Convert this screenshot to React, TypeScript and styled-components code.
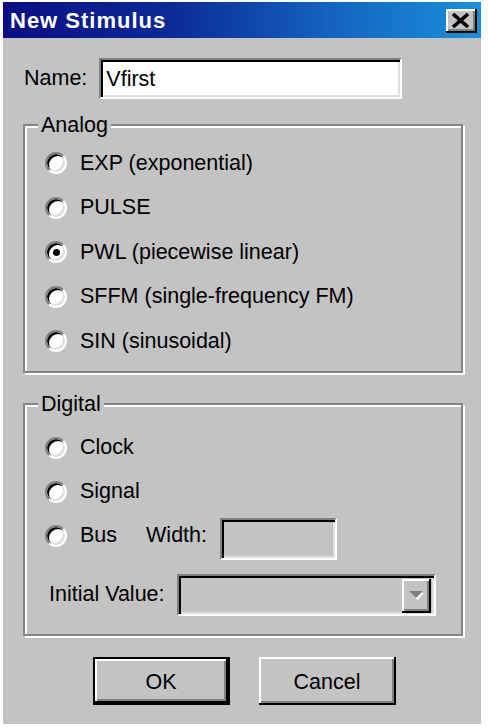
import React from "react";
import styled, { createGlobalStyle } from "styled-components";

const Global = createGlobalStyle`
  html, body { margin: 0; padding: 0; background: #ffffff; }
  body { font-family: "Liberation Sans", Arial, sans-serif; }
`;

const Window = styled.div`
  margin: 2px 0 0 3px;
  width: 478px;
  height: 722px;
  background: #c3c3c3;
  display: flex;
  flex-direction: column;
  font-family: "Liberation Sans", Arial, sans-serif;
  font-size: 21.5px;
  color: #000;
`;

const TitleBar = styled.div`
  height: 36px;
  flex: 0 0 36px;
  box-sizing: border-box;
  padding: 2px 4px 0 7px;
  display: flex;
  align-items: center;
  justify-content: space-between;
  background: linear-gradient(90deg, #0a0e82 0%, #0b2a98 35%, #1466c0 70%, #1a90d8 100%);
`;

const TitleText = styled.span`
  color: #fff;
  font-weight: bold;
  font-size: 22px;
  letter-spacing: 1px;
`;

const raised = `
  background: #c3c3c3;
  box-shadow: inset -2px -2px 0 #000, inset 2px 2px 0 #fff, inset -4px -4px 0 #808080;
`;

const CloseButton = styled.div`
  ${raised}
  width: 31px;
  height: 24px;
  display: flex;
  align-items: center;
  justify-content: center;
  box-sizing: border-box;
  padding: 0 2px 2px 0;
`;

const NameRow = styled.div`
  display: flex;
  align-items: center;
  gap: 12px;
  margin: 20px 0 0 21px;
`;

const sunken = `
  box-sizing: border-box;
  border: 2px solid;
  border-color: #808080 #fff #fff #808080;
  box-shadow: inset 2px 2px 0 #000, inset -2px -2px 0 #dfdfdf;
`;

const TextBox = styled.div<{ $w: number; $h: number; $disabled?: boolean }>`
  ${sunken}
  width: ${(p) => p.$w}px;
  height: ${(p) => p.$h}px;
  background: ${(p) => (p.$disabled ? "#c3c3c3" : "#fff")};
  display: flex;
  align-items: center;
  padding: 2px 0 0 5px;
`;

const Group = styled.div<{ $mt: number; $pt: number; $pb: number }>`
  position: relative;
  margin: ${(p) => p.$mt}px 0 0 20px;
  width: 440px;
  box-sizing: border-box;
  border: 2px solid #858585;
  box-shadow: inset 2px 2px 0 #fff, 2px 2px 0 #fff;
  padding: ${(p) => p.$pt}px 0 ${(p) => p.$pb}px 20px;
  display: flex;
  flex-direction: column;
`;

const Legend = styled.span`
  position: absolute;
  top: -13px;
  left: 13px;
  padding: 0 3px;
  line-height: 24px;
  background: #c3c3c3;
`;

const Row = styled.div<{ $h: number }>`
  height: ${(p) => p.$h}px;
  display: flex;
  align-items: center;
  gap: 13px;
`;

const RadioCircle = styled.span<{ $checked?: boolean }>`
  width: 22px;
  height: 22px;
  box-sizing: border-box;
  border-radius: 50%;
  border: 2px solid;
  border-color: #808080 #fff #fff #808080;
  background: #fff;
  box-shadow: inset 2px 2px 0 #000, inset -2px -2px 0 #dfdfdf;
  display: flex;
  align-items: center;
  justify-content: center;
  flex: 0 0 22px;
  &::after {
    content: "";
    display: ${(p) => (p.$checked ? "block" : "none")};
    width: 7px;
    height: 7px;
    border-radius: 50%;
    background: #000;
    margin: 1px 0 0 1px;
  }
`;

const WidthLabel = styled.span`
  margin-left: 16px;
`;

const WidthBox = styled(TextBox)`
  margin: 6px 0 0 0;
`;

const ValueRow = styled.div`
  display: flex;
  align-items: center;
  gap: 12px;
  margin: 16px 0 0 4px;
`;

const Combo = styled.div`
  ${sunken}
  width: 259px;
  height: 42px;
  background: #c3c3c3;
  display: flex;
  justify-content: flex-end;
  padding: 3px 3px 1px 0;
`;

const DropButton = styled.div`
  ${raised}
  width: 28px;
  display: flex;
  align-items: center;
  justify-content: center;
  padding: 0 1px 1px 0;
`;

const ButtonRow = styled.div`
  display: flex;
  justify-content: center;
  gap: 29px;
  margin: 21px 0 0 4px;
`;

const PushButton = styled.div<{ $default?: boolean }>`
  ${raised}
  width: 137px;
  height: 48px;
  box-sizing: border-box;
  display: flex;
  align-items: center;
  justify-content: center;
  border: 2px solid ${(p) => (p.$default ? "#000" : "transparent")};
  ${(p) =>
    p.$default
      ? ""
      : "box-shadow: inset -2px -2px 0 #000, inset 2px 2px 0 #fff, inset -4px -4px 0 #808080; border: none;"}
  padding-top: 3px;
`;

const analog = [
  "EXP (exponential)",
  "PULSE",
  "PWL (piecewise linear)",
  "SFFM (single-frequency FM)",
  "SIN (sinusoidal)",
];

export default function App() {
  return (
    <>
      <Global />
      <Window>
        <TitleBar>
          <TitleText>New Stimulus</TitleText>
          <CloseButton>
            <svg width="19" height="15" viewBox="0 0 19 15">
              <path d="M2 1 L17 14 M17 1 L2 14" stroke="#000" strokeWidth="3.6" />
            </svg>
          </CloseButton>
        </TitleBar>

        <NameRow>
          <span>Name:</span>
          <TextBox $w={303} $h={41}>Vfirst</TextBox>
        </NameRow>

        <Group $mt={25} $pt={15} $pb={7}>
          <Legend>Analog</Legend>
          {analog.map((t) => (
            <Row key={t} $h={44.5}>
              <RadioCircle $checked={t.startsWith("PWL")} />
              <span>{t}</span>
            </Row>
          ))}
        </Group>

        <Group $mt={30} $pt={21} $pb={18}>
          <Legend>Digital</Legend>
          <Row $h={44}>
            <RadioCircle />
            <span>Clock</span>
          </Row>
          <Row $h={44}>
            <RadioCircle />
            <span>Signal</span>
          </Row>
          <Row $h={44}>
            <RadioCircle />
            <span>Bus</span>
            <WidthLabel>Width:</WidthLabel>
            <WidthBox $w={117} $h={42} $disabled />
          </Row>
          <ValueRow>
            <span>Initial Value:</span>
            <Combo>
              <DropButton>
                <svg width="16" height="9" viewBox="0 0 16 9">
                  <path d="M3 2 L16 2 L9.5 9 Z" fill="#fff" />
                  <path d="M1 0 L15 0 L8 7 Z" fill="#808080" />
                </svg>
              </DropButton>
            </Combo>
          </ValueRow>
        </Group>

        <ButtonRow>
          <PushButton $default>OK</PushButton>
          <PushButton>Cancel</PushButton>
        </ButtonRow>
      </Window>
    </>
  );
}
